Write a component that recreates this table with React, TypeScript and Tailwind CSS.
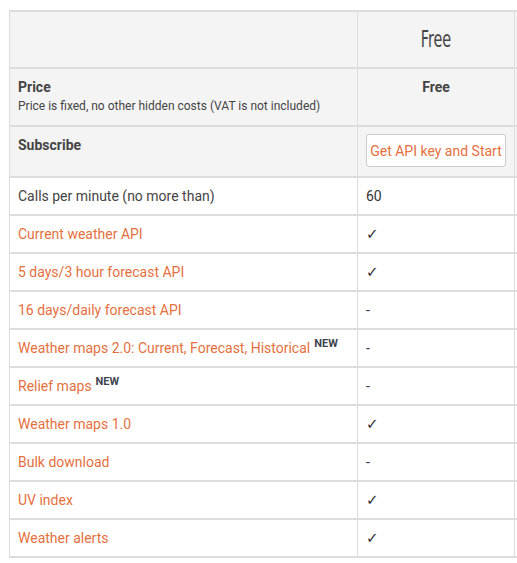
import React from "react"

type Row = {
  label: string
  value: string
  link?: boolean
  isNew?: boolean
}

const rows: Row[] = [
  { label: "Calls per minute (no more than)", value: "60" },
  { label: "Current weather API", value: "✓", link: true },
  { label: "5 days/3 hour forecast API", value: "✓", link: true },
  { label: "16 days/daily forecast API", value: "-", link: true },
  { label: "Weather maps 2.0: Current, Forecast, Historical", value: "-", link: true, isNew: true },
  { label: "Relief maps", value: "-", link: true, isNew: true },
  { label: "Weather maps 1.0", value: "✓", link: true },
  { label: "Bulk download", value: "-", link: true },
  { label: "UV index", value: "✓", link: true },
  { label: "Weather alerts", value: "✓", link: true },
]

const cell = "border-x border-y-2 border-[#ddd] px-2 py-2 align-top"

export default function App() {
  return (
    <div className="w-[517px] h-[563px] overflow-hidden bg-white pt-[10px] pl-[9px] font-['Roboto',sans-serif] text-[14px] leading-5 text-[#444]">
      <table className="table-fixed border-collapse w-[620px]">
        <colgroup>
          <col className="w-[348px]" />
          <col className="w-[157px]" />
          <col className="w-[115px]" />
        </colgroup>
        <tbody>
          <tr className="h-[57px] bg-[#f4f4f4]">
            <td className={cell}></td>
            <td className="border-x border-y-2 border-[#ddd] align-middle text-center">
              <span className="font-['DejaVu_Sans_Condensed','DejaVu_Sans',sans-serif] [font-stretch:condensed] text-[20px] text-[#444] inline-block scale-x-[0.8] scale-y-[1.15]">
                Free
              </span>
            </td>
            <td className={cell}></td>
          </tr>
          <tr className="h-[58px] bg-[#f4f4f4]">
            <td className={cell}>
              <div className="font-bold">Price</div>
              <div className="text-[12px] leading-[18px]">Price is fixed, no other hidden costs (VAT is not included)</div>
            </td>
            <td className={`${cell} text-center font-bold`}>Free</td>
            <td className={cell}></td>
          </tr>
          <tr className="h-[51px] bg-[#f4f4f4]">
            <td className={`${cell} font-bold`}>Subscribe</td>
            <td className="border-x border-y-2 border-[#ddd] pl-2 pt-[7px] pb-2 align-top">
              <div className="w-[140px] h-[33px] rounded-[3px] border border-[#ccc] bg-white flex items-center justify-center text-[#e5703e] whitespace-nowrap">
                Get API key and Start
              </div>
            </td>
            <td className={cell}></td>
          </tr>
          {rows.map((r) => (
            <tr key={r.label} className="h-[38px]">
              <td className={`${cell} ${r.link ? "text-[#e5703e]" : ""} whitespace-nowrap`}>
                {r.label}
                {r.isNew && (
                  <span className="inline-block ml-[4px] text-[11px] leading-none font-bold text-[#3d4450] relative -top-[6px]">NEW</span>
                )}
              </td>
              <td className={`${cell} text-[#333]`}>
                {r.value === "✓" ? (
                  <span className="font-['DejaVu_Sans',sans-serif] text-[15px]">✓</span>
                ) : (
                  r.value
                )}
              </td>
              <td className={cell}></td>
            </tr>
          ))}
        </tbody>
      </table>
    </div>
  )
}
